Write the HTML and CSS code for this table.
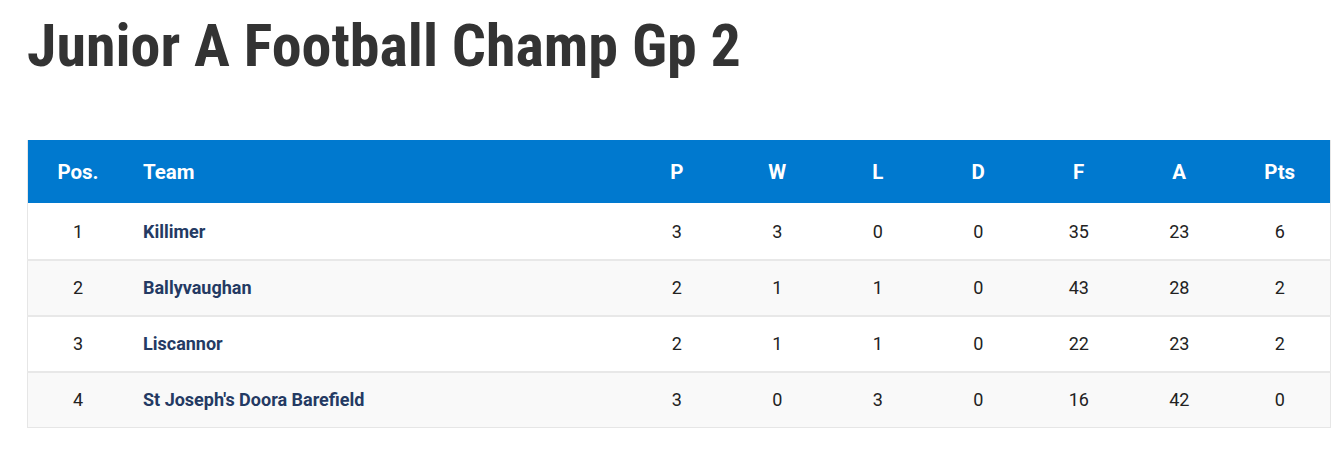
FILE: index.html
```html
<!DOCTYPE html>
<html>
<head>
<meta charset="utf-8">
<link rel="stylesheet" href="styles.css">
</head>
<body>
<div class="page">
  <h1 class="title">Junior A Football Champ Gp 2</h1>
  <table class="league">
    <thead>
      <tr>
        <th class="pos">Pos.</th>
        <th class="team">Team</th>
        <th class="num">P</th>
        <th class="num">W</th>
        <th class="num">L</th>
        <th class="num">D</th>
        <th class="num">F</th>
        <th class="num">A</th>
        <th class="num">Pts</th>
      </tr>
    </thead>
    <tbody>
      <tr><td class="pos">1</td><td class="team">Killimer</td><td class="num">3</td><td class="num">3</td><td class="num">0</td><td class="num">0</td><td class="num">35</td><td class="num">23</td><td class="num">6</td></tr>
      <tr><td class="pos">2</td><td class="team">Ballyvaughan</td><td class="num">2</td><td class="num">1</td><td class="num">1</td><td class="num">0</td><td class="num">43</td><td class="num">28</td><td class="num">2</td></tr>
      <tr><td class="pos">3</td><td class="team">Liscannor</td><td class="num">2</td><td class="num">1</td><td class="num">1</td><td class="num">0</td><td class="num">22</td><td class="num">23</td><td class="num">2</td></tr>
      <tr><td class="pos">4</td><td class="team">St Joseph's Doora Barefield</td><td class="num">3</td><td class="num">0</td><td class="num">3</td><td class="num">0</td><td class="num">16</td><td class="num">42</td><td class="num">0</td></tr>
    </tbody>
  </table>
</div>
</body>
</html>
```

FILE: styles.css
```css
html, body {
  margin: 0;
  padding: 0;
  background: #fff;
}
.page {
  padding: 14px 9px 0 27px;
  font-family: Roboto, "Liberation Sans", sans-serif;
}
.title {
  margin: 0 0 62px 0;
  font-family: "Roboto Condensed", "Liberation Sans Narrow", Roboto, sans-serif;
  font-weight: 700;
  font-size: 60px;
  line-height: 64px;
  color: #333333;
  letter-spacing: 0;
}
.league {
  width: 1304px;
  border-collapse: collapse;
  table-layout: fixed;
  border-left: 1px solid #e6e6e6;
  border-right: 1px solid #e6e6e6;
  border-bottom: 1px solid #e6e6e6;
}
.league th {
  background: #0079cf;
  color: #fff;
  font-weight: 700;
  font-size: 20.5px;
  height: 63px;
  padding: 0;
  border: none;
}
.league td {
  height: 52px;
  padding: 0 0 2px 0;
  font-size: 18px;
  color: #222;
  border-top: 2px solid #e8e8e8;
}
.league tbody tr:first-child td {
  border-top: none;
  height: 56px;
  padding-bottom: 0;
}
.league tbody tr:nth-child(even) td {
  background: #f9f9f9;
}
.pos {
  width: 100px;
  text-align: center;
}
.team {
  text-align: left;
  padding-left: 15px !important;
}
td.team {
  font-weight: 700;
  color: #243a63 !important;
}
.num {
  width: 100.5px;
  text-align: center;
}
```
